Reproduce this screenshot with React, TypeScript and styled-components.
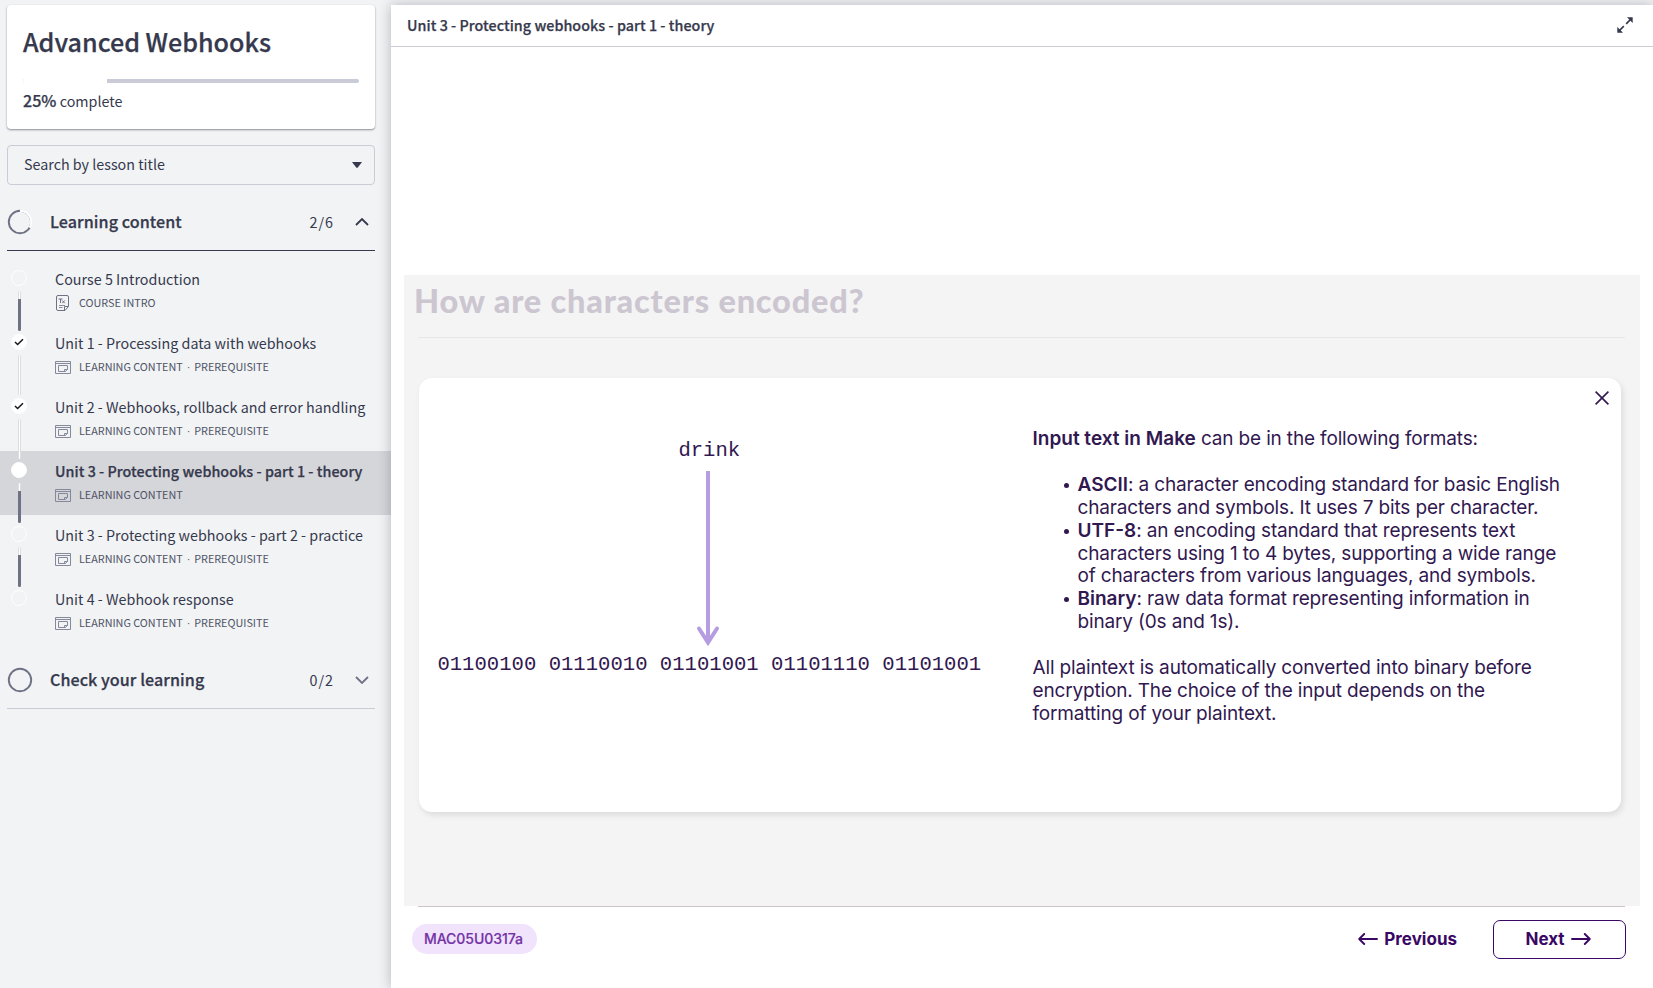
import React from 'react';
import styled, { createGlobalStyle, css } from 'styled-components';

const ink = '#36394d';
const slate = '#6f7285';
const rule = '#c9cbd6';
const plum = '#311850';
const sans = "'Noto Sans CJK SC', 'Noto Sans', sans-serif";
const inter = "Inter, 'Liberation Sans', sans-serif";

const semibold = css`
  font-weight: 500;
  -webkit-text-stroke: 0.25px currentColor;
`;

const Global = createGlobalStyle`
  *, *::before, *::after { box-sizing: border-box; }
  body { margin: 0; background: #f1f3f5; font-family: ${sans}; color: ${ink}; }
  button { font: inherit; color: inherit; background: none; border: 0; padding: 0; }
  h1, h2, p, ul { margin: 0; padding: 0; }
`;

const Page = styled.div`
  display: flex;
  width: 100%;
  height: 988px;
  overflow: hidden;
`;

const Sidebar = styled.aside`
  flex: 0 0 391px;
  padding-top: 5px;
  display: flex;
  flex-direction: column;
`;

const CourseCard = styled.section`
  margin: 0 16px 16px 7px;
  height: 124px;
  padding: 16px 16px 0;
  background: #fff;
  border-radius: 4px;
  box-shadow: 0 1px 2px rgba(40, 44, 60, 0.5);
`;

const CourseTitle = styled.h1`
  font-size: 25.1px;
  line-height: 40px;
  ${semibold}
  white-space: nowrap;
`;

const Track = styled.div`
  margin-top: 18px;
  height: 4px;
  border-radius: 2px;
  background: ${rule};
  overflow: hidden;
`;

const Fill = styled.div`
  height: 100%;
  background: #fff;
`;

const Complete = styled.p`
  margin-top: 5px;
  font-size: 14.3px;
  line-height: 24px;
  b { font-size: 16.1px; ${semibold} }
`;

const Search = styled.div`
  margin: 0 16px 8px 7px;
  height: 40px;
  padding: 0 12px 2px 16px;
  border: 1px solid ${rule};
  border-radius: 4px;
  display: flex;
  align-items: center;
  justify-content: space-between;
  font-size: 14.3px;
  line-height: 24px;
  svg { margin-top: 2px; }
`;

const SectionHead = styled.div<{ $open?: boolean }>`
  margin: 0 16px 0 7px;
  height: 58px;
  border-bottom: 1px solid ${p => (p.$open ? ink : rule)};
  display: flex;
  align-items: center;
  padding: 0 6px 0 0;
`;

const SectionName = styled.h2`
  flex: 1;
  margin: -2px 0 0 17px;
  font-size: 16.1px;
  line-height: 24px;
  letter-spacing: 0.07px;
  ${semibold}
`;

const Count = styled.span`
  font-size: 14.3px;
  line-height: 24px;
  letter-spacing: 1px;
  margin: 0 21px 0 0;
`;

const Lessons = styled.div`
  padding: 8px 0;
`;

const Lesson = styled.div<{ $active?: boolean }>`
  display: flex;
  height: 64px;
  padding-left: 11px;
  background: ${p => (p.$active ? '#d5d6da' : 'transparent')};
`;

const Rail = styled.div`
  flex: 0 0 16px;
  padding-top: 11px;
  display: flex;
  flex-direction: column;
  align-items: center;
  margin-right: 28px;
`;

const Dot = styled.div<{ $filled?: boolean }>`
  flex: 0 0 16px;
  width: 16px;
  border-radius: 50%;
  border: 1px solid #fff;
  background: ${p => (p.$filled ? '#fff' : 'transparent')};
  display: flex;
  align-items: center;
  justify-content: center;
`;

const Connector = styled.div<{ $done?: boolean }>`
  position: relative;
  z-index: 1;
  flex: 0 0 40px;
  width: 3px;
  margin: 5px 0 -13px 1px;
  border-radius: 2px;
  border: solid #dcdde1;
  border-width: 0 1px;
  background: #fff;
  &::after {
    content: '';
    display: ${p => (p.$done ? 'none' : 'block')};
    height: 32px;
    margin: 8px -1px 0;
    background: ${slate};
    border-radius: 0 0 2px 2px;
  }
`;

const LessonText = styled.div`
  padding-top: 8px;
  white-space: nowrap;
`;

const LessonTitle = styled.p<{ $active?: boolean }>`
  font-size: 14.3px;
  line-height: 24px;
  letter-spacing: 0.02px;
  ${p => p.$active && semibold}
  ${p => p.$active && 'letter-spacing: 0.05px;'}
`;

const Meta = styled.p`
  display: flex;
  align-items: center;
  gap: 8px;
  height: 22px;
  font-size: 10.8px;
  line-height: 22px;
  color: #505366;
  svg { position: relative; top: 0.5px; }
`;

const Separator = styled.span`
  margin: 0 1.5px;
  font-family: 'Liberation Sans', sans-serif;
`;

const Main = styled.main`
  flex: 1;
  min-width: 0;
  margin-top: 5px;
  background: #fff;
  box-shadow: 0 0 12px rgba(40, 44, 60, 0.3);
  z-index: 2;
  display: flex;
  flex-direction: column;
`;

const TopBar = styled.header`
  flex: 0 0 42px;
  border-bottom: 1px solid ${rule};
  padding: 0 20px 2px 16px;
  display: flex;
  align-items: center;
  justify-content: space-between;
  font-size: 14.3px;
  letter-spacing: 0.05px;
  ${semibold}
`;

const Slide = styled.section`
  margin: 228px 13px 0;
  height: 631px;
  flex: none;
  background: #f4f4f4;
`;

const SlideTitle = styled.h2`
  height: 63px;
  margin: 0 15px 0 14px;
  padding: 6px 0 0 0;
  border-bottom: 1px solid #e7e6e8;
  font-family: Lato, sans-serif;
  font-weight: 900;
  font-size: 32.5px;
  line-height: 40px;
  letter-spacing: 0.8px;
  color: #ccc6d1;
  text-indent: -4px;
  white-space: nowrap;
`;

const Panel = styled.div`
  position: relative;
  margin: 40px 19px 0 15px;
  height: 434px;
  border-radius: 13px;
  background: #fff;
  box-shadow: 2px 3px 6px rgba(0, 0, 0, 0.1);
  display: flex;
`;

const Close = styled.button`
  position: absolute;
  right: 12px;
  top: 13px;
  width: 14px;
  height: 14px;
  svg { display: block; }
`;

const Figure = styled.div`
  flex: 0 0 579px;
  padding: 59px 0 0 1.6px;
  display: flex;
  flex-direction: column;
  align-items: center;
  font-family: 'Liberation Mono', monospace;
  font-size: 20.6px;
  line-height: 28px;
  color: ${plum};
  white-space: nowrap;
  svg { display: block; margin: 6px 3px 2px 0; }
`;

const Copy = styled.div`
  flex: 1;
  padding: 50px 0 0 34.5px;
  font-family: ${inter};
  font-size: 19px;
  line-height: 22.9px;
  letter-spacing: -0.16px;
  color: ${plum};
  white-space: nowrap;
  b { font-weight: 600; letter-spacing: 0; }
`;

const Bullets = styled.ul`
  list-style: none;
  margin: 22.9px 0;
  padding-left: 45px;
  li { position: relative; }
  li::before { content: ''; position: absolute; left: -14px; top: 9px; width: 5px; height: 5px; border-radius: 50%; background: ${plum}; }
`;

const Footer = styled.footer`
  margin: 0 27px 0 21px;
  height: 81px;
  display: flex;
  align-items: flex-start;
`;

const FooterRule = styled.div`
  height: 1px;
  flex: 0 0 1px;
  margin: 0 28px 0 27px;
  background: #cfc5c9;
`;

const Badge = styled.span`
  margin-top: 17px;
  width: 125px;
  height: 30px;
  border-radius: 15px;
  background: #f0e3fb;
  color: #7433a6;
  font: 500 14px/30px ${inter};
  -webkit-text-stroke: 0.2px currentColor;
  letter-spacing: -0.05px;
  padding-left: 12px;
`;

const NavButton = styled.button<{ $outlined?: boolean }>`
  display: flex;
  align-items: center;
  justify-content: center;
  gap: 6px;
  margin-top: 13px;
  padding: ${p => (p.$outlined ? '0 3px 1px 0' : '0 0 1px')};
  height: 39px;
  width: ${p => (p.$outlined ? '133px' : 'auto')};
  margin-left: ${p => (p.$outlined ? '36px' : 'auto')};
  border: ${p => (p.$outlined ? '1.5px solid #3a0864' : '0')};
  border-radius: 7px;
  color: #3a0864;
  font: 700 17px/24px ${inter};
`;

const Ring = ({ progress }: { progress?: boolean }) => (
  <svg width="26" height="26" viewBox="0 0 26 26" fill="none">
    <circle cx="13" cy="13" r="11.2" stroke={slate} strokeWidth="1.9" />
    {progress && <path d="M13 1.5A11.5 11.5 0 0 1 23 18.8" stroke="#f1f3f5" strokeWidth="3" />}
    {progress && <path d="M13 1.7A11.3 11.3 0 0 1 22.8 18.7" stroke="#fff" strokeWidth="1.6" />}
  </svg>
);

const Chevron = ({ up }: { up?: boolean }) => (
  <svg width="14" height="8" viewBox="0 0 14 8" fill="none" stroke={up ? ink : slate} strokeWidth="1.8">
    <path d={up ? 'M1 7L7 1L13 7' : 'M1 1L7 7L13 1'} />
  </svg>
);

const Check = () => (
  <svg width="10" height="8" viewBox="0 0 10 8" fill="none" stroke="#15151c" strokeWidth="1.5">
    <path d="M1 4L3.6 6.5L9 1.2" />
  </svg>
);

const PageIcon = () => (
  <svg width="16" height="16" viewBox="0 0 16 16" fill="none" stroke={slate}>
    <path d="M3 .5H12A1.5 1.5 0 0 1 13.5 2V11.500L10 15.500H3A1.5 1.5 0 0 1 1.500 14V2A1.5 1.5 0 0 1 3 .5ZM9.500 15.2V11.500H13.3" />
    <path d="M3.500 4H7.500M5.500 4V8M7.300 5.500L9.700 8.200M9.700 5.500L7.300 8.200" />
    <path d="M4 10.500H10M4 12.500H7.500" strokeWidth=".8" />
  </svg>
);

const WindowIcon = () => (
  <svg width="16" height="14" viewBox="0 0 16 14" fill="none" stroke="#85889a">
    <path d="M.5 1.500H15.500V13.500H.5ZM.5 3.500H15.500M3.500 5.500H12.500V9L10.500 11.500H3.500ZM12.500 9.500H9.500V11" />
  </svg>
);

const Arrow = ({ left }: { left?: boolean }) => (
  <svg width="20" height="12" viewBox="0 0 20 12" fill="none" stroke="#3a0864" strokeWidth="1.9" strokeLinecap="round" strokeLinejoin="round">
    <path d={left ? 'M19 6H1.2M6.2 1L1.2 6L6.2 11' : 'M1 6H18.8M13.8 1L18.8 6L13.8 11'} />
  </svg>
);

type LessonData = { title: string; meta: string; required?: boolean; state?: 'done' | 'active'; page?: boolean };
const lessons: LessonData[] = [
  { title: 'Course 5 Introduction', meta: 'COURSE INTRO', page: true },
  { title: 'Unit 1 - Processing data with webhooks', meta: 'LEARNING CONTENT', required: true, state: 'done' },
  { title: 'Unit 2 - Webhooks, rollback and error handling', meta: 'LEARNING CONTENT', required: true, state: 'done' },
  { title: 'Unit 3 - Protecting webhooks - part 1 - theory', meta: 'LEARNING CONTENT', state: 'active' },
  { title: 'Unit 3 - Protecting webhooks - part 2 - practice', meta: 'LEARNING CONTENT', required: true },
  { title: 'Unit 4 - Webhook response', meta: 'LEARNING CONTENT', required: true },
];

const percent = 25;

export default function App() {
  return (
    <>
      <Global />
      <Page>
        <Sidebar>
          <CourseCard>
            <CourseTitle>Advanced Webhooks</CourseTitle>
            <Track><Fill style={{ width: `${percent}%` }} /></Track>
            <Complete><b>{percent}%</b> complete</Complete>
          </CourseCard>
          <Search>
            Search by lesson title
            <svg width="10" height="6" viewBox="0 0 10 6" fill={ink}><path d="M0 0H10L5.8 5.4Q5 6.2 4.2 5.4Z" /></svg>
          </Search>
          <SectionHead $open>
            <Ring progress />
            <SectionName>Learning content</SectionName>
            <Count>2/6</Count>
            <Chevron up />
          </SectionHead>
          <Lessons>
            {lessons.map((l, i) => (
              <Lesson key={l.title} $active={l.state === 'active'}>
                <Rail>
                  <Dot $filled={!!l.state}>{l.state === 'done' && <Check />}</Dot>
                  {i < lessons.length - 1 && <Connector $done={l.state === 'done'} />}
                </Rail>
                <LessonText>
                  <LessonTitle $active={l.state === 'active'}>{l.title}</LessonTitle>
                  <Meta>
                    {l.page ? <PageIcon /> : <WindowIcon />}
                    <span>{l.meta}{l.required && <> <Separator>·</Separator> PREREQUISITE</>}</span>
                  </Meta>
                </LessonText>
              </Lesson>
            ))}
          </Lessons>
          <SectionHead>
            <Ring />
            <SectionName>Check your learning</SectionName>
            <Count>0/2</Count>
            <Chevron />
          </SectionHead>
        </Sidebar>
        <Main>
          <TopBar>
            Unit 3 - Protecting webhooks - part 1 - theory
            <svg width="16" height="16" viewBox="0 0 16 16" fill="none" stroke={ink} strokeWidth="1.7">
              <path d="M9.2 6.8L14 2M6.8 9.2L2 14" />
              <path d="M10 .3H15.7V6L13.4 3.8L12.2 2.6ZM.3 10V15.7H6L3.8 13.4L2.6 12.2Z" fill={ink} stroke="none" />
            </svg>
          </TopBar>
          <Slide>
            <SlideTitle>How are characters encoded?</SlideTitle>
            <Panel>
              <Figure>
                <span>drink</span>
                <svg width="24" height="178" viewBox="0 0 24 178" fill="none" stroke="#b69ce0">
                  <path d="M12 0V168" strokeWidth="4" />
                  <path d="M3 157.500L12 171.500L21 157.500" strokeWidth="4" strokeLinecap="round" />
                </svg>
                <span>01100100 01110010 01101001 01101110 01101001</span>
              </Figure>
              <Copy>
                <p><b>Input text in Make</b> can be in the following formats:</p>
                <Bullets>
                  <li><b>ASCII</b>: a character encoding standard for basic English<br />characters and symbols. It uses 7 bits per character.</li>
                  <li><b>UTF-8</b>: an encoding standard that represents text<br />characters using 1 to 4 bytes, supporting a wide range<br />of characters from various languages, and symbols.</li>
                  <li><b>Binary</b>: raw data format representing information in<br />binary (0s and 1s).</li>
                </Bullets>
                <p>All plaintext is automatically converted into binary before<br />encryption. The choice of the input depends on the<br />formatting of your plaintext.</p>
              </Copy>
              <Close aria-label="Close">
                <svg width="14" height="14" viewBox="0 0 14 14" stroke={plum} strokeWidth="1.6"><path d="M.6.6L13.4 13.4M13.4.6L.6 13.4" /></svg>
              </Close>
            </Panel>
          </Slide>
          <FooterRule />
          <Footer>
            <Badge>MAC05U0317a</Badge>
            <NavButton><Arrow left />Previous</NavButton>
            <NavButton $outlined>Next<Arrow /></NavButton>
          </Footer>
        </Main>
      </Page>
    </>
  );
}
